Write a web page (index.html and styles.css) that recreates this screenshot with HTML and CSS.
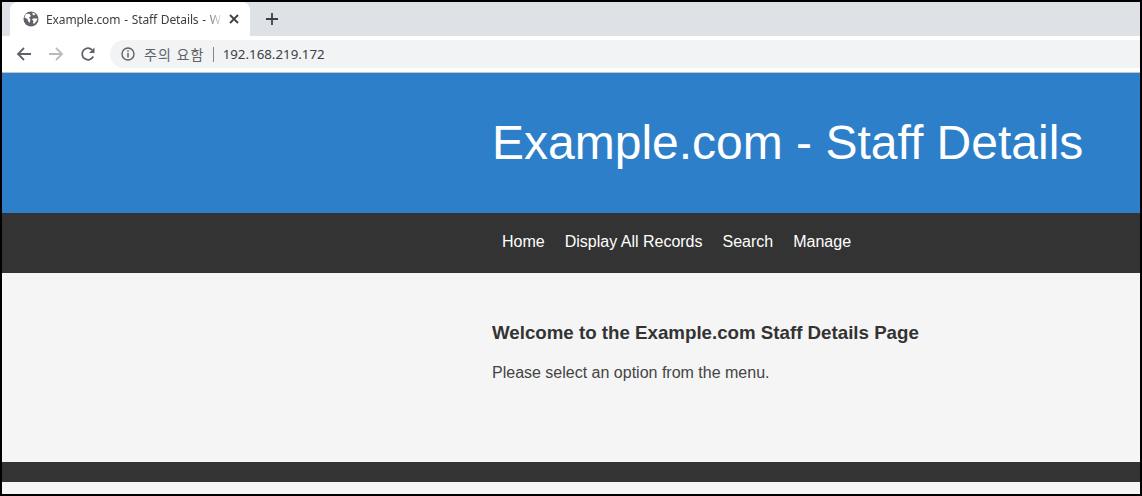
FILE: index.html
```html
<!DOCTYPE html>
<html lang="en">
<head>
<meta charset="utf-8">
<title>Example.com - Staff Details</title>
<link rel="stylesheet" href="styles.css">
</head>
<body>
<div class="frame">
  <div class="tabstrip">
    <div class="tab">
      <svg class="globe" width="16" height="16" viewBox="0 0 16 16"><circle cx="8" cy="8" r="7.5" fill="#5f6368"/><path d="M2.8 3 L6.5 2.8 L8 5 L6 6.5 L7.5 8.5 L6.5 12 L5 10 L4.5 8 L1.5 6.5 Z M9.5 1.5 L12.5 3 L11 4.5 L9.5 3.5 Z M10 7.5 L14.5 7.5 L13.5 10 L11 13 L10 12 L10.5 10 L9 8.5 Z" fill="#fff"/></svg>
      <span class="tab-title">Example.com - Staff Details - W</span>
      <svg class="tab-close" width="10" height="10" viewBox="0 0 10 10"><path d="M1 1 L9 9 M9 1 L1 9" stroke="#3c4043" stroke-width="1.8"/></svg>
    </div>
    <svg class="newtab" width="12" height="12" viewBox="0 0 12 12"><path d="M6 0 V12 M0 6 H12" stroke="#3c4043" stroke-width="1.8"/></svg>
  </div>
  <div class="toolbar">
    <svg class="nav-icon" width="16" height="16" viewBox="0 0 16 16"><path d="M15 8 H2 M8 2 L2 8 L8 14" fill="none" stroke="#5f6368" stroke-width="1.8"/></svg>
    <svg class="nav-icon" width="16" height="16" viewBox="0 0 16 16"><path d="M1 8 H14 M8 2 L14 8 L8 14" fill="none" stroke="#b9bbbe" stroke-width="1.8"/></svg>
    <svg class="nav-icon" width="16" height="16" viewBox="0 0 16 16"><path d="M13.2 10.5 A5.8 5.8 0 1 1 12.2 4" fill="none" stroke="#5f6368" stroke-width="1.8"/><path d="M14.5 1.5 V7 H9 Z" fill="#5f6368"/></svg>
    <div class="omnibox">
      <svg class="info" width="14" height="14" viewBox="0 0 14 14"><circle cx="7" cy="7" r="6" fill="none" stroke="#5f6368" stroke-width="1.4"/><path d="M7 6 V10.5" stroke="#5f6368" stroke-width="1.5"/><path d="M7 3.2 V4.8" stroke="#5f6368" stroke-width="1.5"/></svg>
      <span class="warn">주의 요함</span>
      <span class="sep"></span>
      <span class="url">192.168.219.172</span>
    </div>
  </div>
  <header class="masthead"><div class="inner"><h1>Example.com - Staff Details</h1></div></header>
  <nav class="menu"><div class="inner menu-items">
    <a href="#">Home</a><a href="#">Display All Records</a><a href="#">Search</a><a href="#">Manage</a>
  </div></nav>
  <main class="content"><div class="inner">
    <h2>Welcome to the Example.com Staff Details Page</h2>
    <p>Please select an option from the menu.</p>
  </div></main>
  <footer class="foot"></footer>
</div>
</body>
</html>
```

FILE: styles.css
```css
* { box-sizing: border-box; }
html, body { margin: 0; padding: 0; height: 100%; background: #000; overflow: hidden; }
.frame {
  width: 1142px; height: 496px;
  border: 2px solid #000;
  background: #f5f5f5;
  display: flex; flex-direction: column;
  font-family: "Liberation Sans", Arial, sans-serif;
}
.tabstrip { height: 34px; background: #dee1e6; display: flex; align-items: flex-end; padding-left: 8px; flex: none; }
.tab {
  width: 240px; height: 34px; background: #fff;
  border-radius: 8px 8px 0 0;
  display: flex; align-items: center; padding-left: 13px;
}
.globe { flex: none; }
.tab-title {
  margin-left: 7px; width: 178px; font-family: "Noto Sans", sans-serif; font-size: 12px; color: #3c4043;
  white-space: nowrap; flex: none;
  letter-spacing: -0.12px; word-spacing: 0.8px;
  -webkit-mask-image: linear-gradient(to right, #000 158px, rgba(0,0,0,0.15) 175px);
  mask-image: linear-gradient(to right, #000 158px, rgba(0,0,0,0.15) 175px);
}
.tab-close { margin-left: 5px; flex: none; }
.newtab { margin: 0 0 11px 16px; flex: none; }
.toolbar { height: 36px; background: #fff; display: flex; align-items: center; padding-left: 14px; flex: none; }
.nav-icon { flex: none; margin-right: 16px; }
.nav-icon:nth-of-type(3) { margin-right: 14px; }
.omnibox {
  flex: 1; height: 28px; background: #f1f3f4;
  border-radius: 14px 0 0 14px;
  display: flex; align-items: center; padding-left: 11px;
}
.info { flex: none; }
.warn { margin-left: 9px; font-family: "Noto Sans CJK KR", sans-serif; font-size: 14px; color: #5f6368; letter-spacing: 1.2px; }
.sep { width: 1px; height: 15px; background: #80868b; margin: 0 9px 0 8px; }
.url { font-family: "Noto Sans", sans-serif; font-size: 13.3px; color: #3c4043; }
.masthead { height: 141px; background: #2d7fc9; border-top: 1px solid #c4c4c4; flex: none; }
.inner { margin-left: 490px; }
h1 { margin: 0; padding-top: 41px; font-size: 48px; line-height: 58px; font-weight: 400; color: #fff; white-space: nowrap; }
.menu { height: 60px; background: #333; flex: none; display: flex; align-items: center; }
.menu-items { display: flex; gap: 20px; padding: 0 0 2px 10px; }
.menu a { color: #fff; text-decoration: none; font-size: 16px; line-height: 20px; }
.content { height: 189px; background: #f5f5f5; flex: none; }
h2 { margin: 0; padding-top: 49px; font-size: 18.72px; line-height: 22px; font-weight: 700; color: #333; }
p { margin: 19px 0 0; font-size: 16px; line-height: 20px; color: #444; }
.foot { height: 20px; background: #333; flex: none; }
```
